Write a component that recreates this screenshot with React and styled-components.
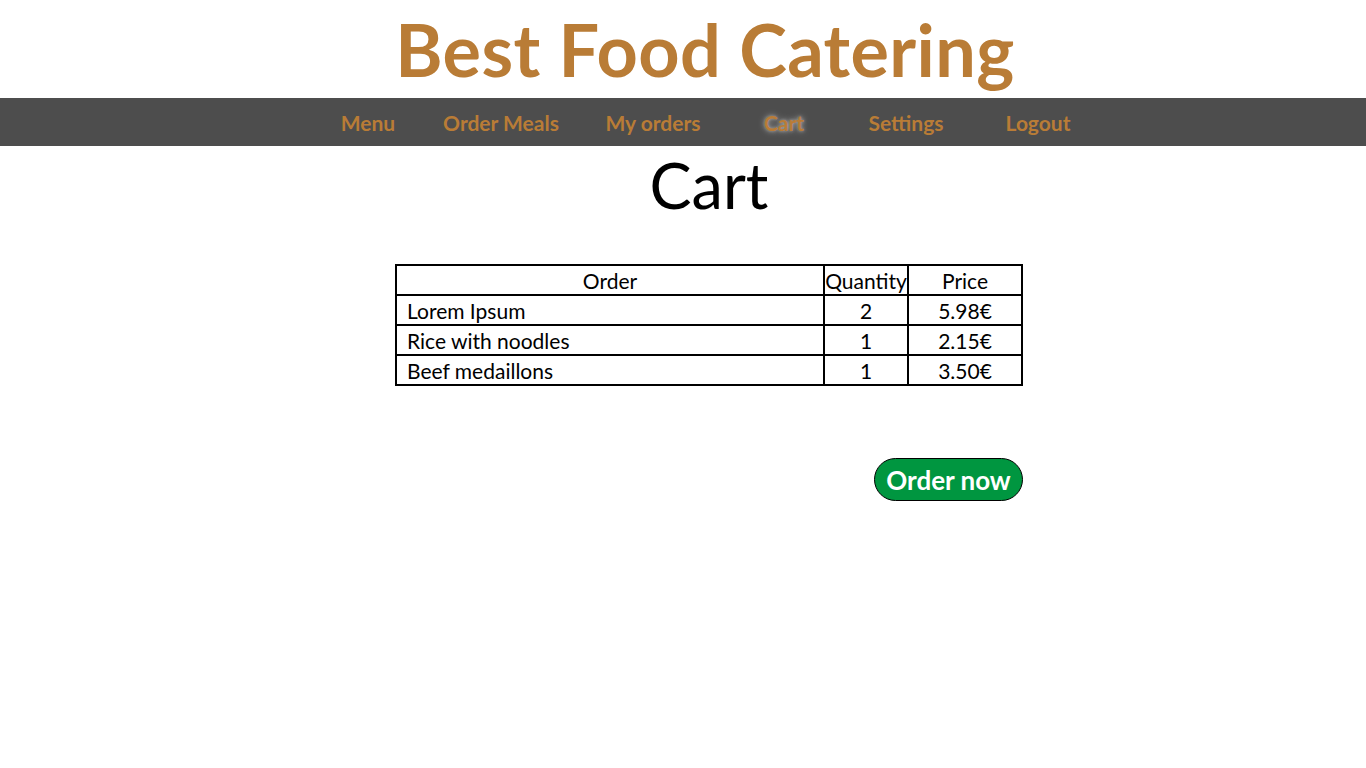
import React from 'react';
import styled, { createGlobalStyle } from 'styled-components';

const GlobalStyle = createGlobalStyle`
  html, body {
    margin: 0;
    padding: 0;
    background: #fff;
  }
  body {
    font-family: Lato, "Open Sans", "DejaVu Sans", sans-serif;
    color: #000;
  }
`;

const Header = styled.header`
  height: 98px;
  display: flex;
  align-items: center;
  justify-content: center;
  padding-left: 44px;
`;

const Title = styled.h1`
  margin: 0;
  font-size: 72px;
  font-weight: 700;
  color: #b97c36;
  letter-spacing: 0.4px;
`;

const NavBar = styled.nav`
  background: #4d4d4d;
  height: 48px;
`;

const NavList = styled.ul`
  list-style: none;
  margin: 0;
  padding: 0 0 0 42px;
  height: 100%;
  display: flex;
  justify-content: center;
  align-items: center;
`;

const NavItem = styled.li`
  width: ${(p) => p.$w}px;
  text-align: center;
  font-size: 21px;
  font-weight: 700;
  color: #b97c36;
  text-shadow: ${(p) => (p.$active ? '0 0 6px #b0b0b0, 0 0 3px #9a9a9a' : 'none')};
  cursor: pointer;
`;

const Main = styled.main`
  padding-left: 52px;
  display: flex;
  flex-direction: column;
  align-items: center;
`;

const PageTitle = styled.h2`
  margin: -2px 0 0;
  font-size: 63px;
  font-weight: 400;
  line-height: 82px;
`;

const Content = styled.div`
  width: 628px;
  margin-top: 38px;
  display: flex;
  flex-direction: column;
  align-items: flex-end;
`;

const Table = styled.table`
  width: 100%;
  border-collapse: collapse;
  border: 2px solid #000;
  font-size: 21px;
`;

const Th = styled.th`
  border: 2px solid #000;
  font-weight: 400;
  font-size: 21px;
  height: 28px;
  padding: 0;
  width: ${(p) => (p.$w ? `${p.$w}px` : 'auto')};
`;

const Td = styled.td`
  border: 2px solid #000;
  height: 28px;
  padding: 0 ${(p) => (p.$left ? '10px' : '0')};
  text-align: ${(p) => (p.$left ? 'left' : 'center')};
`;

const OrderButton = styled.button`
  margin-top: 72px;
  width: 149px;
  height: 43px;
  padding: 0;
  background: #009640;
  color: #fff;
  border: 1px solid #000;
  border-radius: 22px;
  font-family: inherit;
  font-size: 26px;
  font-weight: 700;
  cursor: pointer;
`;

const navItems = [
  { label: 'Menu', w: 120 },
  { label: 'Order Meals', w: 146 },
  { label: 'My orders', w: 158 },
  { label: 'Cart', w: 104, active: true },
  { label: 'Settings', w: 140 },
  { label: 'Logout', w: 124 },
];

const rows = [
  { name: 'Lorem Ipsum', qty: 2, price: '5.98€' },
  { name: 'Rice with noodles', qty: 1, price: '2.15€' },
  { name: 'Beef medaillons', qty: 1, price: '3.50€' },
];

export default function App() {
  return (
    <>
      <GlobalStyle />
      <Header>
        <Title>Best Food Catering</Title>
      </Header>
      <NavBar>
        <NavList>
          {navItems.map((item) => (
            <NavItem key={item.label} $w={item.w} $active={item.active}>
              {item.label}
            </NavItem>
          ))}
        </NavList>
      </NavBar>
      <Main>
        <PageTitle>Cart</PageTitle>
        <Content>
          <Table>
            <thead>
              <tr>
                <Th>Order</Th>
                <Th $w={82}>Quantity</Th>
                <Th $w={112}>Price</Th>
              </tr>
            </thead>
            <tbody>
              {rows.map((row) => (
                <tr key={row.name}>
                  <Td $left>{row.name}</Td>
                  <Td>{row.qty}</Td>
                  <Td>{row.price}</Td>
                </tr>
              ))}
            </tbody>
          </Table>
          <OrderButton>Order now</OrderButton>
        </Content>
      </Main>
    </>
  );
}
